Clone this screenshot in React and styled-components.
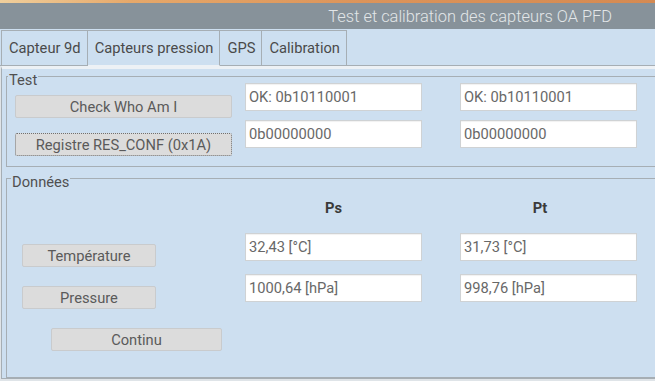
import React from 'react';
import styled, { createGlobalStyle } from 'styled-components';

const GlobalStyle = createGlobalStyle`
  *, *::before, *::after { box-sizing: border-box; }
  html, body { margin: 0; padding: 0; background: #dfe4e8; }
  body { font-family: Roboto, "Noto Sans", sans-serif; font-size: 14.7px; }
`;

const Window = styled.div`
  width: 655px;
  height: 381px;
  display: flex;
  flex-direction: column;
  overflow: hidden;
  background: #dfe4e8;
`;

const TopStrip = styled.div`
  flex: none;
  height: 3px;
  background: linear-gradient(to right, #f0cf9c 0%, #e6a86a 20%, #dc945a 55%, #d58a52 100%);
`;

const TitleBar = styled.div`
  flex: none;
  height: 26px;
  display: flex;
  align-items: center;
  justify-content: flex-end;
  padding-right: 43px;
  background: #87929a;
  color: #e2e6e8;
  font-weight: 300;
  font-size: 16.4px;
`;

const TabBar = styled.div`
  flex: none;
  height: 37px;
  display: flex;
  padding: 1px 0 0 1px;
  background: #cddff0;
  border-bottom: 1px solid #a6aeb4;
`;

const Tab = styled.div`
  display: flex;
  align-items: center;
  padding: 0 6px 0 7px;
  color: #4a4a4a;
  background: #cddff0;
  border-top: 1px solid #a6aeb4;
  border-right: 1px solid #a6aeb4;
  border-left: ${p => (p.$first ? '1px solid #a6aeb4' : 'none')};
  margin-bottom: ${p => (p.$active ? '-1px' : '0')};
  border-bottom: ${p => (p.$active ? '1px solid #edf1f5' : 'none')};
`;

const Pane = styled.div`
  flex: 1;
  display: flex;
  flex-direction: column;
  margin: 0 0 2px 1px;
  padding: 3px 0 0 4px;
  background: #cddff0;
  border-top: 3px solid #edf1f5;
  border-left: 1px solid #a6aeb4;
  border-bottom: 1px solid #a6aeb4;
`;

const GroupBox = styled.fieldset`
  min-width: 0;
  margin: ${p => p.$gap || 0}px -12px 0 0;
  padding: 0 0 ${p => p.$bottom || 0}px 8px;
  border: 1px solid #a6aeb4;
  flex: ${p => (p.$grow ? 1 : 'none')};
`;

const Legend = styled.legend`
  height: 8px;
  line-height: 16px;
  padding: 0 1px;
  margin-left: ${p => -7 + (p.$inset || 0)}px;
  color: #505050;
`;

const Grid = styled.div`
  display: grid;
  grid-template-columns: 230px 215px 177px;
`;

const Stack = styled.div`
  display: flex;
  flex-direction: column;
  align-items: flex-start;
  padding-top: ${p => p.$top || 0}px;
  gap: ${p => p.$gap || 0}px;
`;

const Button = styled.button`
  width: ${p => p.$width}px;
  height: 23px;
  margin-left: ${p => p.$indent || 0}px;
  padding: 0;
  font-family: inherit;
  font-size: inherit;
  color: #5a5a5a;
  background: #dcdcdc;
  border: 1px ${p => (p.$focused ? 'dotted #707070' : 'solid #c9cbcd')};
  border-radius: 2px;
`;

const Field = styled.input`
  width: 177px;
  height: 28px;
  padding: 0 0 0 3px;
  font-family: inherit;
  font-size: inherit;
  color: #686868;
  background: #fff;
  border: 1px solid #cfd2d4;
  box-shadow: inset 0 1px 1px rgba(0, 0, 0, 0.06);
  outline: none;
`;

const Header = styled.div`
  width: 177px;
  height: 16px;
  line-height: 16px;
  margin-bottom: 4px;
  padding-right: ${p => p.$shift || 0}px;
  text-align: center;
  font-weight: 700;
  color: #3a3a3a;
`;

const tabs = ['Capteur 9d', 'Capteurs pression', 'GPS', 'Calibration'];

const test = [
  ['OK: 0b10110001', '0b00000000'],
  ['OK: 0b10110001', '0b00000000'],
];

const data = [
  { name: 'Ps', temp: '32,43 [°C]', press: '1000,64 [hPa]', shift: 0 },
  { name: 'Pt', temp: '31,73 [°C]', press: '998,76 [hPa]', shift: 17 },
];

export default function App() {
  return (
    <Window>
      <GlobalStyle />
      <TopStrip />
      <TitleBar>Test et calibration des capteurs OA PFD</TitleBar>
      <TabBar>
        {tabs.map((t, i) => (
          <Tab key={t} $first={i === 0} $active={i === 1}>
            {t}
          </Tab>
        ))}
      </TabBar>
      <Pane>
        <GroupBox $bottom={10}>
          <Legend>Test</Legend>
          <Grid>
            <Stack $top={15} $gap={15}>
              <Button $width={217}>Check Who Am I</Button>
              <Button $width={217} $focused>
                Registre RES_CONF (0x1A)
              </Button>
            </Stack>
            {test.map((col, i) => (
              <Stack key={i} $top={3} $gap={9}>
                {col.map((v, j) => (
                  <Field key={j} readOnly value={v} />
                ))}
              </Stack>
            ))}
          </Grid>
        </GroupBox>
        <GroupBox $gap={7} $grow>
          <Legend $inset={3}>Données</Legend>
          <Grid>
            <Stack $top={62} $gap={19}>
              <Button $width={134} $indent={7}>Température</Button>
              <Button $width={134} $indent={7}>Pressure</Button>
              <Button $width={171} $indent={36}>Continu</Button>
            </Stack>
            {data.map(d => (
              <Stack key={d.name} $top={18} $gap={13}>
                <Header $shift={d.shift}>{d.name}</Header>
                <Field readOnly value={d.temp} />
                <Field readOnly value={d.press} />
              </Stack>
            ))}
          </Grid>
        </GroupBox>
      </Pane>
    </Window>
  );
}
